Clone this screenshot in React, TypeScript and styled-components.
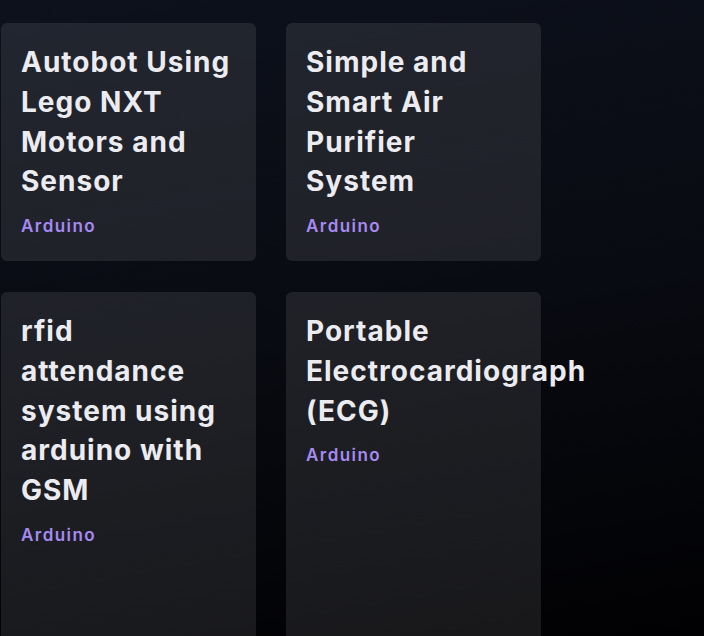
import React from "react";
import styled, { createGlobalStyle } from "styled-components";

const Global = createGlobalStyle`
  html, body {
    margin: 0;
    padding: 0;
    height: 100%;
    overflow: hidden;
  }
  body {
    background: linear-gradient(170deg, #0d111c 0%, #090b12 50%, #010103 100%);
    font-family: Inter, "Noto Sans", sans-serif;
  }
`;

const Page = styled.main`
  min-height: 636px;
  padding: 23px 0 0 1px;
  box-sizing: border-box;
`;

const Grid = styled.div`
  display: grid;
  grid-template-columns: repeat(2, 255px);
  grid-template-rows: auto minmax(380px, auto);
  column-gap: 30px;
  row-gap: 31px;
`;

const Card = styled.article`
  background: rgba(255, 255, 255, 0.09);
  border-radius: 6px;
  padding: 20px 20px 23px;
  box-sizing: border-box;
`;

const Title = styled.h3`
  margin: 0;
  font-size: 28px;
  line-height: 1.42;
  font-weight: 700;
  letter-spacing: 0.036em;
  color: #ececf0;
`;

const Tag = styled.span`
  display: block;
  margin-top: 12px;
  font-size: 17px;
  line-height: 24px;
  font-weight: 600;
  letter-spacing: 0.085em;
  color: #a68af2;
`;

const projects = [
  { title: "Autobot Using Lego NXT Motors and Sensor", tag: "Arduino" },
  { title: "Simple and Smart Air Purifier System", tag: "Arduino" },
  { title: "rfid attendance system using arduino with GSM", tag: "Arduino" },
  { title: "Portable Electrocardiograph (ECG)", tag: "Arduino" },
];

export default function App() {
  return (
    <>
      <Global />
      <Page>
        <Grid>
          {projects.map((p) => (
            <Card key={p.title}>
              <Title>{p.title}</Title>
              <Tag>{p.tag}</Tag>
            </Card>
          ))}
        </Grid>
      </Page>
    </>
  );
}
